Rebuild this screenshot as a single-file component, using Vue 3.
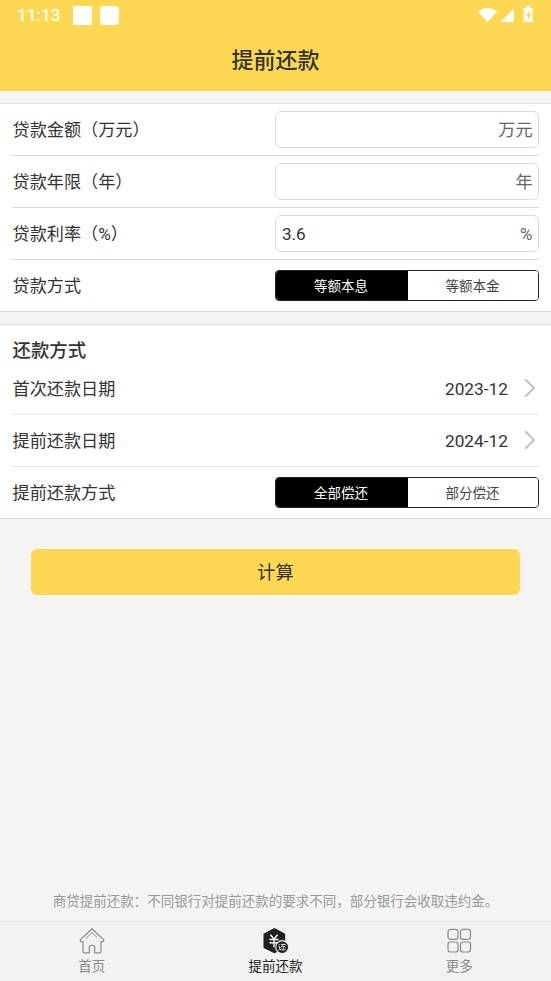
<script setup>
import { ref } from 'vue'

const amount = ref('')
const years = ref('')
const rate = ref('3.6')
const loanType = ref(0)
const repayType = ref(0)
const loanTypes = ['等额本息', '等额本金']
const repayTypes = ['全部偿还', '部分偿还']
const dates = [
  { label: '首次还款日期', value: '2023-12' },
  { label: '提前还款日期', value: '2024-12' },
]
</script>

<template>
  <div class="screen">
    <header class="header">
      <div class="status">
        <span class="time">11:13</span>
        <i class="notice"></i>
        <i class="notice round"></i>
        <svg class="signals" width="58" height="20" viewBox="0 0 58 20">
          <path d="M0 6.2Q9.5 -1.6 19 6.2L9.5 16.4Z" fill="#fff" transform="translate(0 .6)" />
          <path d="M36 3.5v13.5H22.5Z" fill="#fff" />
          <path d="M48.3 1h4v2h2.2v14H45.7V3h2.6Z" fill="#fff" />
          <path d="M51.3 5.2L47.8 10.8h2v4.3l3.6-5.9h-2.1Z" fill="#fed852" />
        </svg>
      </div>
      <h1 class="title">提前还款</h1>
    </header>

    <section class="panel first">
      <div class="row">
        <label class="label">贷款金额（万元）</label>
        <div class="field"><input v-model="amount" /><span class="unit">万元</span></div>
      </div>
      <div class="row">
        <label class="label">贷款年限（年）</label>
        <div class="field"><input v-model="years" /><span class="unit">年</span></div>
      </div>
      <div class="row">
        <label class="label">贷款利率（%）</label>
        <div class="field"><input v-model="rate" /><span>%</span></div>
      </div>
      <div class="row last">
        <span class="label">贷款方式</span>
        <div class="segments">
          <button v-for="(t, i) in loanTypes" :key="t" :class="{ on: loanType === i }" @click="loanType = i">{{ t }}</button>
        </div>
      </div>
    </section>

    <section class="panel">
      <h2 class="heading">还款方式</h2>
      <div v-for="d in dates" :key="d.label" class="row light">
        <span class="label">{{ d.label }}</span>
        <span class="date">{{ d.value }}</span>
        <svg class="chevron" width="12" height="20" viewBox="0 0 12 20">
          <path d="M1.2 1.2L10 10L1.2 18.8" fill="none" stroke="#c4c4c4" stroke-width="2.1" />
        </svg>
      </div>
      <div class="row last">
        <span class="label">提前还款方式</span>
        <div class="segments">
          <button v-for="(t, i) in repayTypes" :key="t" :class="{ on: repayType === i }" @click="repayType = i">{{ t }}</button>
        </div>
      </div>
    </section>

    <button class="submit">计算</button>

    <p class="note">商贷提前还款：不同银行对提前还款的要求不同，部分银行会收取违约金。</p>

    <nav class="tabs">
      <a class="tab">
        <svg width="28" height="28" viewBox="0 0 28 28" fill="none" stroke="#8a8a8a" stroke-width="1.2" stroke-linejoin="round" stroke-linecap="round">
          <path d="M14 1.8L25.6 12.6Q26.2 14.6 24.4 14.6H23V24.4Q23 25.9 21.5 25.9H16.7V20.2Q16.7 18.3 14 18.3T11.3 20.2V25.9H6.5Q5 25.9 5 24.4V14.6H3.6Q1.8 14.6 2.4 12.6Z" />
          <path d="M7.8 11.4L14 5.7L18.6 9.9" stroke-width="1" />
        </svg>
        <span>首页</span>
      </a>
      <a class="tab active">
        <svg width="28" height="28" viewBox="1.3 0 28 28" fill="none">
          <path d="M13.1 1.3Q13.7 1 14.3 1.3L23.9 6.5Q24.5 6.9 24.5 7.6V20Q24.5 20.8 23.9 21.2L14.3 26.1Q13.7 26.4 13.1 26.1L3.4 21.2Q2.8 20.8 2.8 20V7.6Q2.8 6.9 3.4 6.5Z" fill="#202022" />
          <path d="M9.8 7.8L13.3 12.1L16.8 7.8M8.8 12.5H17.8M8.8 15.8H17.8M13.3 12.3V20.3" stroke="#fff" stroke-width="1.4" />
          <circle cx="21.5" cy="20.1" r="6.5" fill="#202022" stroke="#f2f2f2" stroke-width="1.1" />
          <path d="M20.2 17.4H25M22.8 17.5L20.1 20.4M22.5 18.9V22M23.3 19.3L24.8 20.7M18 16.9L18.9 17.9M17.8 19.3H19V21.9L17.9 22.9M19 22.3Q20 23.1 25 22.8" stroke="#fff" stroke-width=".9" />
        </svg>
        <span>提前还款</span>
      </a>
      <a class="tab">
        <svg width="28" height="28" viewBox="0 0 28 28" fill="none" stroke="#8a8a8a" stroke-width="1.2">
          <rect x="3" y="2.4" width="10" height="10" rx="2.6" />
          <rect x="15.5" y="2.4" width="10" height="10" rx="2.6" />
          <rect x="3" y="15" width="10" height="10" rx="2.6" />
          <rect x="15.5" y="15" width="10" height="10" rx="2.6" />
        </svg>
        <span>更多</span>
      </a>
    </nav>
  </div>
</template>

<style>
body {
  background: #f4f4f4;
}
</style>

<style scoped>
.screen {
  display: flex;
  flex-direction: column;
  width: 551px;
  height: 981px;
  background: #f4f4f4;
  color: #333;
  font-family: Roboto, "Noto Sans CJK SC", sans-serif;
  overflow: hidden;
}
.screen * {
  box-sizing: border-box;
}
.header {
  flex: none;
  height: 91px;
  background: #fed852;
}
.status {
  display: flex;
  align-items: center;
  height: 30px;
  padding: 0 15px 0 17px;
}
.time {
  width: 56px;
  color: #fff;
  font-size: 17px;
  font-weight: 500;
  letter-spacing: .1px;
}
.notice {
  width: 19px;
  height: 19px;
  margin-right: 8px;
  background: #fff;
  border-radius: 1px;
}
.notice.round {
  border-radius: 4px;
}
.signals {
  margin-left: auto;
}
.title {
  margin: 0;
  height: 61px;
  line-height: 62px;
  text-align: center;
  font-size: 22px;
  font-weight: 500;
}
.panel {
  flex: none;
  margin-top: 12px;
  padding: 0 12px;
  background: #fff;
  border-top: 1px solid #dfdfdf;
  border-bottom: 1px solid #dcdcdc;
}
.row {
  display: flex;
  align-items: center;
  height: 52px;
  border-bottom: 1px solid #d9d9d9;
}
.row.light {
  border-color: #e5e5e5;
}
.row.last {
  height: 51px;
  border-bottom: 0;
}
.label {
  flex: 1;
  padding: 0 0 2px .5px;
  font-size: 17.15px;
}
.field {
  display: flex;
  align-items: center;
  width: 264px;
  height: 37px;
  padding: 0 5.5px 0 6px;
  border: 1px solid #dcdcdc;
  border-radius: 6px;
  font-size: 17.1px;
  color: #666;
}
.unit {
  padding-bottom: 2px;
}
.field input {
  flex: 1;
  min-width: 0;
  padding: 0;
  border: 0;
  outline: 0;
  background: none;
  color: #333;
  font: inherit;
}
.segments {
  display: flex;
  width: 264px;
  height: 31px;
  border: 1px solid #222;
  border-radius: 4px;
  overflow: hidden;
}
.segments button {
  flex: 1;
  padding: 0 1px 1px 0;
  border: 0;
  background: #fff;
  color: #444;
  font-family: inherit;
  font-size: 13.5px;
}
.segments button.on {
  flex: 0 0 132px;
  padding-right: 2px;
  background: #000;
  color: #fff;
}
.heading {
  height: 38px;
  margin: 0;
  padding: 12px 0 0 .5px;
  line-height: 27px;
  font-size: 18.4px;
  font-weight: 500;
}
.date {
  font-size: 17.3px;
}
.chevron {
  margin: 0 3.5px 2px 15.5px;
}
.submit {
  flex: none;
  height: 46px;
  margin: 30px 31px 0;
  padding: 0 0 2px;
  border: 0;
  border-radius: 6px;
  background: #fed852;
  color: #333;
  font-family: inherit;
  font-size: 18.4px;
}
.note {
  margin: auto 0 10px;
  line-height: 20px;
  text-align: center;
  font-size: 13.5px;
  color: #999;
}
.tabs {
  flex: none;
  display: flex;
  height: 60px;
  background: #f2f2f2;
  border-top: 1px solid #e4e4e4;
}
.tab {
  flex: 1;
  display: flex;
  flex-direction: column;
  align-items: center;
  padding-top: 5px;
  font-size: 13.5px;
  line-height: 20px;
  color: #8a8a8a;
}
.tab span {
  margin-top: 1px;
}
.tab.active {
  color: #222;
}
</style>
